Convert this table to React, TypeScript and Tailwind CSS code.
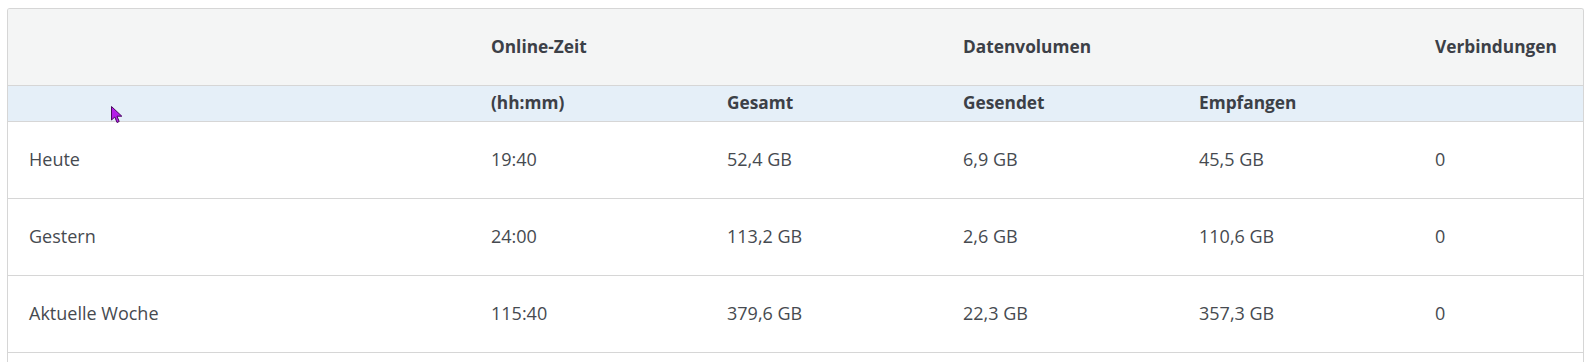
const rows = [
  { label: "Heute", time: "19:40", total: "52,4 GB", sent: "6,9 GB", received: "45,5 GB", connections: "0" },
  { label: "Gestern", time: "24:00", total: "113,2 GB", sent: "2,6 GB", received: "110,6 GB", connections: "0" },
  { label: "Aktuelle Woche", time: "115:40", total: "379,6 GB", sent: "22,3 GB", received: "357,3 GB", connections: "0" },
];

const Cursor = () => (
  <svg className="absolute left-[111px] top-[106px]" width="13" height="18" viewBox="0 0 13 18">
    <path d="M0.5 0.5 L0.5 14 L3.8 11 L6 16.5 L8.2 15.5 L6 10.2 L10.8 10.2 Z" fill="#b41ee8" stroke="#4a0860" strokeWidth="1" />
  </svg>
);

export default function App() {
  return (
    <main className="relative min-h-[362px] w-full bg-white pl-[7px] pt-[8px] font-['Open_Sans',sans-serif]">
      {/* stats table */}
      <div className="w-[1577px] overflow-hidden rounded-t-[3px] border border-b-0 border-[#d6d6d6]">
        <table className="w-full table-fixed border-collapse text-[18px]">
          <colgroup>
            <col className="w-[462px]" />
            <col className="w-[236px]" />
            <col className="w-[236px]" />
            <col className="w-[236px]" />
            <col className="w-[236px]" />
            <col />
          </colgroup>
          <thead className="text-[17.3px] font-semibold text-[#3c4047]">
            <tr className="h-[76px] border-b border-[#d6d6d6] bg-[#f4f5f5] [&>th]:pl-[21px] [&>th]:text-left">
              <th></th>
              <th>Online-Zeit</th>
              <th></th>
              <th>Datenvolumen</th>
              <th></th>
              <th>Verbindungen</th>
            </tr>
            <tr className="h-[36px] border-b border-[#d6d6d6] bg-[#e5eff8] [&>th]:pl-[21px] [&>th]:text-left">
              <th></th>
              <th>(hh:mm)</th>
              <th>Gesamt</th>
              <th>Gesendet</th>
              <th>Empfangen</th>
              <th></th>
            </tr>
          </thead>
          <tbody className="text-[#464a50]">
            {rows.map((row) => (
              <tr key={row.label} className="h-[77px] border-b border-[#d6d6d6] [&>td]:pl-[21px]">
                <td>{row.label}</td>
                <td>{row.time}</td>
                <td>{row.total}</td>
                <td>{row.sent}</td>
                <td>{row.received}</td>
                <td>{row.connections}</td>
              </tr>
            ))}
          </tbody>
        </table>
        <div className="h-[20px]" />
      </div>
      <Cursor />
    </main>
  );
}
